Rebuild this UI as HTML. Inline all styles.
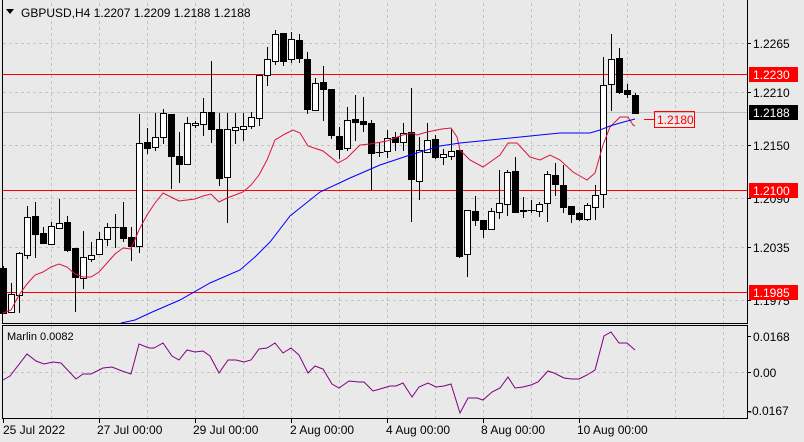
<!DOCTYPE html>
<html><head><meta charset="utf-8"><style>
html,body{margin:0;padding:0;background:#e9e9e9;}
svg{display:block;font-family:"Liberation Sans",sans-serif;}
</style></head><body>
<svg width="804" height="442" viewBox="0 0 804 442" xmlns="http://www.w3.org/2000/svg">
<rect width="804" height="442" fill="#e9e9e9"/>
<g stroke="#c4c4c4" stroke-width="1" stroke-dasharray="3,3" shape-rendering="crispEdges">
<path d="M51.5 3V323M99.5 3V323M147.5 3V323M195.5 3V323M243.5 3V323M291.5 3V323M339.5 3V323M387.5 3V323M435.5 3V323M483.5 3V323M531.5 3V323M579.5 3V323M627.5 3V323M675.5 3V323M723.5 3V323"/>
<path d="M3 43.5H747M3 92.5H747M3 145.5H747M3 198.5H747M3 247.5H747M3 300.5H747"/>
<path d="M51.5 326V418M99.5 326V418M147.5 326V418M195.5 326V418M243.5 326V418M291.5 326V418M339.5 326V418M387.5 326V418M435.5 326V418M483.5 326V418M531.5 326V418M579.5 326V418M627.5 326V418M675.5 326V418M723.5 326V418"/>
<path d="M3 372.5H747"/>
</g>
<path d="M3 112.5H747" stroke="#c0c0c0" shape-rendering="crispEdges"/>
<path d="M3 74.5H747M3 190.5H747M3 292.5H747" stroke="#ff0000" shape-rendering="crispEdges"/>
<g stroke="#000" stroke-width="1" shape-rendering="crispEdges">
<path d="M3.5 266V314M11.5 283V313M19.5 252V313M27.5 206V259M35.5 202V258M43.5 227V243M51.5 222V245M59.5 199V229M67.5 216V252M75.5 248V312M83.5 231V289M91.5 242V262M99.5 232V255M107.5 223V246M115.5 214V248M123.5 202V242M131.5 227V261M139.5 114V253M147.5 128V154M155.5 113V151M163.5 109V144M171.5 114V189M179.5 132V183M187.5 117V164M195.5 121V128M203.5 98V136M211.5 61V143M219.5 113V186M227.5 113V223M235.5 113V144M243.5 113V141M251.5 112V129M259.5 75V126M267.5 47V86M275.5 30V65M283.5 33V66M291.5 32V63M299.5 34V63M307.5 52V114M315.5 78V110M323.5 66V121M331.5 89V139M339.5 127V159M347.5 107V151M355.5 95V141M363.5 97V132M371.5 120V190M379.5 142V157M387.5 130V158M395.5 132V151M403.5 123V151M411.5 88V222M419.5 137V200M427.5 123V152M435.5 135V159M443.5 149V165M451.5 129V160M459.5 150V258M467.5 210V277M475.5 196V226M483.5 220V238M491.5 208V229M499.5 170V219M507.5 170V216M515.5 157V213M523.5 197V218M531.5 200V213M539.5 202V217M547.5 171V222M555.5 163V196M563.5 165V213M571.5 206V223M579.5 212V221M587.5 203V221M595.5 185V220M603.5 57V208M611.5 34V111M619.5 48V94M627.5 84V98M635.5 93V113"/>
<path d="M111.5 227.5H119.5M375.5 152.5H383.5M527.5 210.5H535.5"/>
<g fill="#000">
<rect x="0.5" y="268.5" width="6" height="45"/>
<rect x="32.5" y="216.5" width="6" height="18"/>
<rect x="40.5" y="233.5" width="6" height="10"/>
<rect x="64.5" y="222.5" width="6" height="28"/>
<rect x="72.5" y="248.5" width="6" height="29"/>
<rect x="120.5" y="227.5" width="6" height="11"/>
<rect x="128.5" y="237.5" width="6" height="9"/>
<rect x="144.5" y="142.5" width="6" height="6"/>
<rect x="168.5" y="114.5" width="6" height="42"/>
<rect x="176.5" y="156.5" width="6" height="8"/>
<rect x="208.5" y="112.5" width="6" height="17"/>
<rect x="216.5" y="129.5" width="6" height="49"/>
<rect x="280.5" y="33.5" width="6" height="28"/>
<rect x="296.5" y="40.5" width="6" height="18"/>
<rect x="304.5" y="59.5" width="6" height="50"/>
<rect x="320.5" y="82.5" width="6" height="7"/>
<rect x="328.5" y="89.5" width="6" height="46"/>
<rect x="336.5" y="136.5" width="6" height="13"/>
<rect x="352.5" y="119.5" width="6" height="3"/>
<rect x="360.5" y="121.5" width="6" height="3"/>
<rect x="368.5" y="123.5" width="6" height="30"/>
<rect x="392.5" y="137.5" width="6" height="5"/>
<rect x="408.5" y="132.5" width="6" height="47"/>
<rect x="432.5" y="139.5" width="6" height="18"/>
<rect x="456.5" y="150.5" width="6" height="106"/>
<rect x="472.5" y="211.5" width="6" height="9"/>
<rect x="480.5" y="220.5" width="6" height="9"/>
<rect x="512.5" y="171.5" width="6" height="41"/>
<rect x="520.5" y="210.5" width="6" height="1"/>
<rect x="552.5" y="175.5" width="6" height="9"/>
<rect x="560.5" y="185.5" width="6" height="22"/>
<rect x="568.5" y="206.5" width="6" height="8"/>
<rect x="576.5" y="213.5" width="6" height="6"/>
<rect x="616.5" y="58.5" width="6" height="34"/>
<rect x="624.5" y="90.5" width="6" height="4"/>
<rect x="632.5" y="95.5" width="6" height="18"/>
</g>
<g fill="#fff">
<rect x="8.5" y="294.5" width="6" height="18"/>
<rect x="16.5" y="253.5" width="6" height="42"/>
<rect x="24.5" y="217.5" width="6" height="38"/>
<rect x="48.5" y="226.5" width="6" height="18"/>
<rect x="56.5" y="223.5" width="6" height="5"/>
<rect x="80.5" y="257.5" width="6" height="21"/>
<rect x="88.5" y="255.5" width="6" height="4"/>
<rect x="96.5" y="239.5" width="6" height="15"/>
<rect x="104.5" y="227.5" width="6" height="12"/>
<rect x="136.5" y="143.5" width="6" height="103"/>
<rect x="152.5" y="137.5" width="6" height="10"/>
<rect x="160.5" y="113.5" width="6" height="24"/>
<rect x="184.5" y="123.5" width="6" height="41"/>
<rect x="192.5" y="123.5" width="6" height="2"/>
<rect x="200.5" y="112.5" width="6" height="12"/>
<rect x="224.5" y="129.5" width="6" height="48"/>
<rect x="232.5" y="127.5" width="6" height="3"/>
<rect x="240.5" y="126.5" width="6" height="3"/>
<rect x="248.5" y="117.5" width="6" height="9"/>
<rect x="256.5" y="75.5" width="6" height="43"/>
<rect x="264.5" y="59.5" width="6" height="16"/>
<rect x="272.5" y="34.5" width="6" height="27"/>
<rect x="288.5" y="39.5" width="6" height="20"/>
<rect x="312.5" y="83.5" width="6" height="27"/>
<rect x="344.5" y="120.5" width="6" height="28"/>
<rect x="384.5" y="138.5" width="6" height="13"/>
<rect x="400.5" y="133.5" width="6" height="9"/>
<rect x="416.5" y="150.5" width="6" height="31"/>
<rect x="424.5" y="140.5" width="6" height="12"/>
<rect x="440.5" y="154.5" width="6" height="3"/>
<rect x="448.5" y="151.5" width="6" height="5"/>
<rect x="464.5" y="210.5" width="6" height="44"/>
<rect x="488.5" y="211.5" width="6" height="18"/>
<rect x="496.5" y="203.5" width="6" height="9"/>
<rect x="504.5" y="172.5" width="6" height="32"/>
<rect x="536.5" y="204.5" width="6" height="7"/>
<rect x="544.5" y="174.5" width="6" height="29"/>
<rect x="584.5" y="205.5" width="6" height="14"/>
<rect x="592.5" y="195.5" width="6" height="12"/>
<rect x="600.5" y="85.5" width="6" height="109"/>
<rect x="608.5" y="59.5" width="6" height="25"/>
</g>
</g>
<polyline fill="none" stroke="#dc143c" stroke-width="1" points="3,313 11,310 19,295 27,284 35,275 43,272 51,267 59,264 67,267 75,274 83,277 91,277 99,272 107,263 115,254 123,248 131,249 139,230 147,215 155,203 163,193 171,197 179,201 187,200 195,199 203,196 211,194 219,202 227,198 235,195 243,192 251,185 259,175 267,160 275,140 285,134 293,130 300,133 308,146 323,151 338,163 347,158 360,145 370,144 387,141 403,135 412,133 417,135 427,132 442,129 451,128 457,137 460,150 470,160 483,167 500,155 508,143 517,143 530,157 540,160 550,155 560,160 573,172 587,180 595,173 603,145 610,127 620,117 628,117 633,125 635,126"/>
<polyline fill="none" stroke="#0000ff" stroke-width="1" points="121,323 135,320 150,313 180,300 210,283 240,270 255,257 270,242 290,216 320,192 350,178 380,165 410,155 440,146 460,143 500,139 540,135 560,133 590,133 600,130 610,126 620,123 635,119"/>
<polyline fill="none" stroke="#800080" stroke-width="1" points="3,380 10,376 27,354 36,361 44,364 53,362 61,363 76,379 83,374 91,374 103,368 112,367 122,371 131,374 139,344 149,348 154,348 163,343 172,356 179,360 187,350 195,352 203,351 210,356 219,373 228,360 236,360 244,362 251,360 259,349 267,348 275,343 283,353 291,348 299,355 308,373 315,366 323,369 332,384 339,388 349,381 359,382 364,382 373,391 380,389 390,386 396,386 403,383 412,397 419,387 428,383 436,387 444,386 451,384 460,413 468,398 477,398 483,400 492,392 500,388 508,377 515,388 523,387 531,385 538,382 548,371 554,373 564,378 572,379 579,379 587,375 595,370 604,336 611,332 619,343 627,343 635,350"/>
<g fill="none" stroke="#000" shape-rendering="crispEdges">
<path d="M2.5 0V323.5H747.5V0"/>
<rect x="2.5" y="325.5" width="745" height="93"/>
<path d="M747 43.5H751M747 92.5H751M747 145.5H751M747 198.5H751M747 247.5H751M747 300.5H751M747 336.5H751M747 372.5H751M747 411.5H751"/>
<path d="M3.5 419V423M99.5 419V423M195.5 419V423M291.5 419V423M387.5 419V423M483.5 419V423M579.5 419V423"/>
</g>
<path d="M6 9H14L10 14Z" fill="#000"/>
<text x="21" y="17" font-size="12" fill="#000">GBPUSD,H4  1.2207 1.2209 1.2188 1.2188</text>
<g font-size="12" fill="#000">
<text x="753" y="48">1.2265</text>
<text x="753" y="97">1.2210</text>
<text x="753" y="150">1.2150</text>
<text x="753" y="203">1.2090</text>
<text x="753" y="252">1.2035</text>
<text x="753" y="305">1.1975</text>
<text x="753" y="341">0.0168</text>
<text x="753" y="377">0.00</text>
<text x="748" y="415">-0.0167</text>
</g>
<rect x="749" y="67" width="49" height="15" fill="#ff0000"/>
<text x="753" y="79" font-size="12" fill="#fff">1.2230</text>
<rect x="749" y="183" width="49" height="15" fill="#ff0000"/>
<text x="753" y="195" font-size="12" fill="#fff">1.2100</text>
<rect x="749" y="285" width="49" height="15" fill="#ff0000"/>
<text x="753" y="297" font-size="12" fill="#fff">1.1985</text>
<rect x="749" y="105" width="49" height="15" fill="#000"/>
<text x="753" y="117" font-size="12" fill="#fff">1.2188</text>
<path d="M644 119.5H654" stroke="#ff0000"/>
<rect x="654.5" y="111.5" width="40" height="16" fill="none" stroke="#ff0000"/>
<text x="657" y="124" font-size="12" fill="#ff0000">1.2180</text>
<text x="7" y="340" font-size="11" fill="#000">Marlin 0.0082</text>
<g font-size="12" fill="#000">
<text x="3" y="434">25 Jul 2022</text>
<text x="97" y="434">27 Jul 00:00</text>
<text x="193" y="434">29 Jul 00:00</text>
<text x="290" y="434">2 Aug 00:00</text>
<text x="386" y="434">4 Aug 00:00</text>
<text x="481" y="434">8 Aug 00:00</text>
<text x="577" y="434">10 Aug 00:00</text>
</g>
</svg>
</body></html>
